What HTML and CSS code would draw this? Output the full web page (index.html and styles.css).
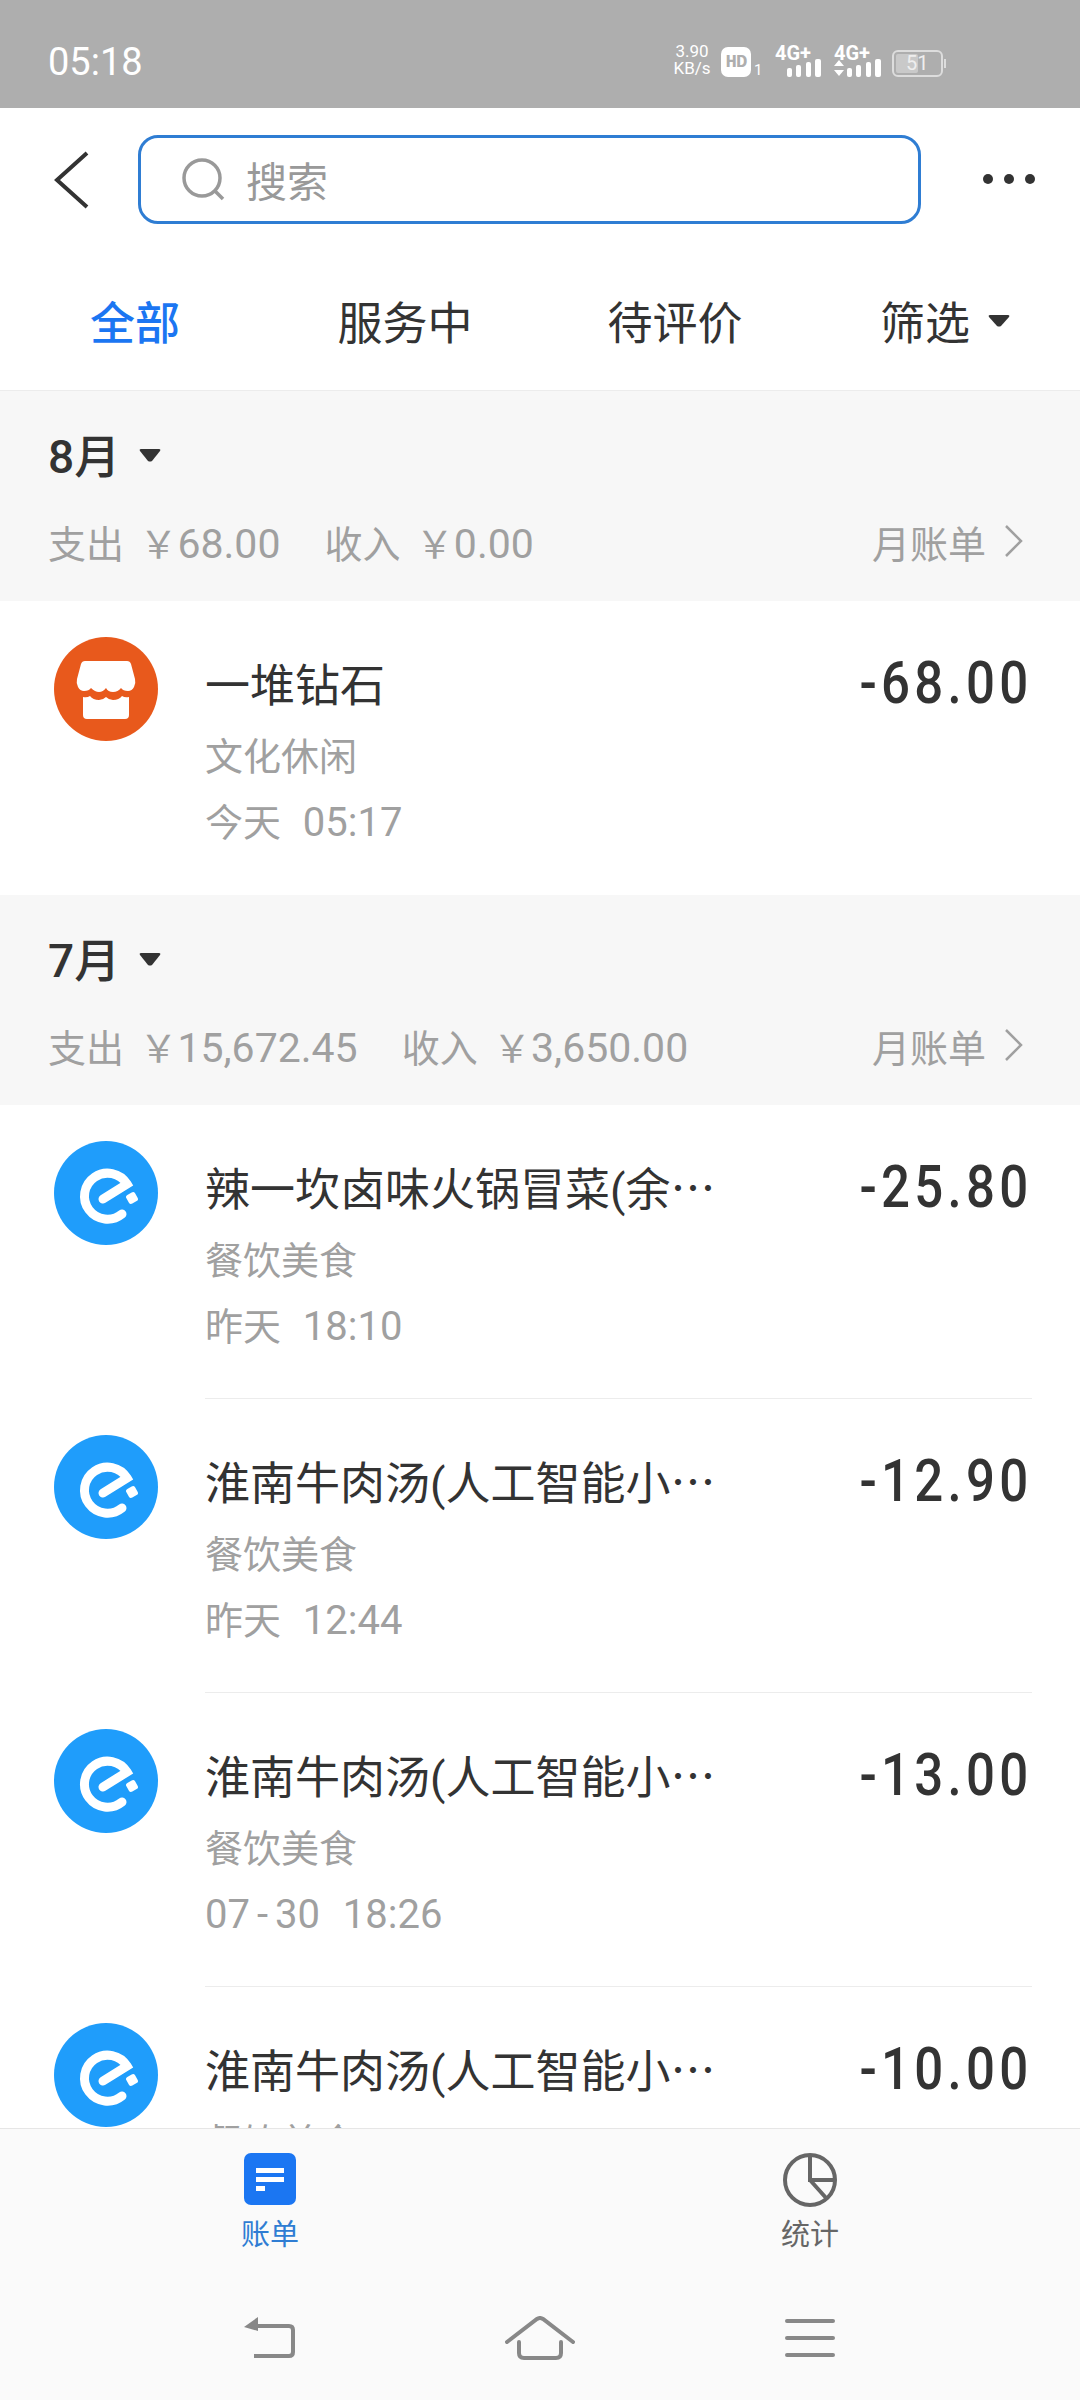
FILE: index.html
```html
<!DOCTYPE html>
<html lang="zh-CN">
<head>
  <meta charset="UTF-8" />
  <title>账单</title>
  <link rel="stylesheet" href="styles.css">
</head>
<body>

  <!-- Status bar -->
  <div class="status-bar">
    <span class="clock">05:18</span>
    <div class="status-icons">
      <div class="speed"><span>3.90</span><span>KB/s</span></div>
      <div class="hd"><b>HD</b><i>1</i></div>
      <div class="net">
        <span class="net-type">4G+</span>
        <svg class="bars" width="34" height="18" viewBox="0 0 34 18"><rect x="0" y="9" width="5" height="9" rx="2"/><rect x="9" y="6" width="5" height="12" rx="2"/><rect x="19" y="3" width="5" height="15" rx="2"/><rect x="28" y="0" width="6" height="18" rx="2"/></svg>
      </div>
      <div class="net net-two">
        <span class="net-type">4G+</span>
        <svg class="bars" width="47" height="18" viewBox="0 0 47 18"><path d="M5 1l5 6H0zM5 17l5-6H0z"/><rect x="13" y="9" width="5" height="9" rx="2"/><rect x="22" y="6" width="5" height="12" rx="2"/><rect x="32" y="3" width="5" height="15" rx="2"/><rect x="41" y="0" width="6" height="18" rx="2"/></svg>
      </div>
      <div class="battery"><div class="battery-fill" style="width: 51%"></div><span>51</span></div>
      <div class="battery-nub"></div>
    </div>
  </div>

  <!-- Search -->
  <div class="search-row">
    <svg class="back" width="36" height="58" viewBox="0 0 36 58"><path d="M34 2L4 29l30 27" fill="none" stroke="#333" stroke-width="4"/></svg>
    <div class="search-box">
      <svg width="46" height="46" viewBox="0 0 46 46"><circle cx="21" cy="21" r="18" fill="none" stroke="#999" stroke-width="3.5"/><path d="M33 33l9 9" stroke="#999" stroke-width="3.5"/></svg>
      <span>搜索</span>
    </div>
    <div class="more"><i></i><i></i><i></i></div>
  </div>

  <!-- Tabs -->
  <div class="tabs">
    <div class="tab active">全部</div>
    <div class="tab">服务中</div>
    <div class="tab">待评价</div>
    <div class="tab">筛选<svg class="caret" width="22" height="13" viewBox="0 0 22 13"><path d="M2 1h18q2 0 1 2l-8 9q-2 1-4 0L1 3q-1-2 1-2z"/></svg></div>
  </div>

  <!-- List -->
  <div class="list">

    <div class="month">
      <div class="month-name">8月<svg class="caret" width="22" height="14" viewBox="0 0 22 14"><path d="M2 1h18q2 0 1 2l-8 10q-2 1-4 0L1 3q-1-2 1-2z"/></svg></div>
      <div class="month-sum">
        <div><span class="sum">支出 ￥<b>68.00</b></span><span class="sum">收入 ￥<b>0.00</b></span></div>
        <div class="month-bill">月账单
          <svg width="20" height="32" viewBox="0 0 20 32"><path d="M2 1l15 15L2 31" fill="none" stroke="#a0a0a0" stroke-width="2.5"/></svg>
        </div>
      </div>
    </div>

    <div class="item last">
      <svg class="logo" width="104" height="104" viewBox="0 0 104 104">
        <circle cx="52" cy="52" r="52" fill="#e8591c"/>
        <path d="M31 24h42q3 0 4 3l4 15q1 4-1 8-2 4-6 4-5 0-7-3-3 4-8 4t-7-4q-3 4-7 4t-8-4q-2 3-7 3-4 0-6-4-2-4-1-8l4-15q1-3 4-3z" fill="#fff"/>
        <path d="M29 60q4 1 7-1 3 4 9 4 4 0 7-3 3 3 7 3 6 0 9-4 3 2 7 1v18q0 4-4 4H33q-4 0-4-4z" fill="#fff"/>
      </svg>
      <div class="item-info">
        <div class="item-title">一堆钻石</div>
        <div class="item-sub">文化休闲</div>
        <div class="item-sub time">今天&nbsp;&nbsp;<b>05:17</b></div>
      </div>
      <div class="amount">-68.00</div>
    </div>

    <div class="month">
      <div class="month-name">7月<svg class="caret" width="22" height="14" viewBox="0 0 22 14"><path d="M2 1h18q2 0 1 2l-8 10q-2 1-4 0L1 3q-1-2 1-2z"/></svg></div>
      <div class="month-sum">
        <div><span class="sum">支出 ￥<b>15,672.45</b></span><span class="sum">收入 ￥<b>3,650.00</b></span></div>
        <div class="month-bill">月账单
          <svg width="20" height="32" viewBox="0 0 20 32"><path d="M2 1l15 15L2 31" fill="none" stroke="#a0a0a0" stroke-width="2.5"/></svg>
        </div>
      </div>
    </div>

    <div class="item">
      <svg class="logo" width="104" height="104" viewBox="0 0 104 104"><use href="#ele"/></svg>
      <div class="item-info">
        <div class="item-title">辣一坎卤味火锅冒菜(余⋯</div>
        <div class="item-sub">餐饮美食</div>
        <div class="item-sub time">昨天&nbsp;&nbsp;<b>18:10</b></div>
      </div>
      <div class="amount">-25.80</div>
    </div>

    <div class="item">
      <svg class="logo" width="104" height="104" viewBox="0 0 104 104"><use href="#ele"/></svg>
      <div class="item-info">
        <div class="item-title">淮南牛肉汤(人工智能小⋯</div>
        <div class="item-sub">餐饮美食</div>
        <div class="item-sub time">昨天&nbsp;&nbsp;<b>12:44</b></div>
      </div>
      <div class="amount">-12.90</div>
    </div>

    <div class="item">
      <svg class="logo" width="104" height="104" viewBox="0 0 104 104"><use href="#ele"/></svg>
      <div class="item-info">
        <div class="item-title">淮南牛肉汤(人工智能小⋯</div>
        <div class="item-sub">餐饮美食</div>
        <div class="item-sub time"><b>07<span class="dash">-</span>30&nbsp;&nbsp;18:26</b></div>
      </div>
      <div class="amount">-13.00</div>
    </div>

    <div class="item">
      <svg class="logo" width="104" height="104" viewBox="0 0 104 104"><use href="#ele"/></svg>
      <div class="item-info">
        <div class="item-title">淮南牛肉汤(人工智能小⋯</div>
        <div class="item-sub">餐饮美食</div>
      </div>
      <div class="amount">-10.00</div>
    </div>

  </div>

  <!-- Bottom tabs -->
  <div class="bottom">
    <div class="bottom-tabs">
      <div class="bottom-tab active">
        <svg width="52" height="52" viewBox="0 0 52 52"><rect width="52" height="52" rx="7" fill="#1b76f2"/><path d="M12 15h28v5H12zM12 24h28v5H12zM12 33h9v5h-9z" fill="#fff"/></svg>
        <span>账单</span>
      </div>
      <div class="bottom-tab">
        <svg width="54" height="54" viewBox="0 0 54 54"><circle cx="27" cy="27" r="25" fill="none" stroke="#666" stroke-width="4"/><path d="M27 2v25h25M27 27l17 19" fill="none" stroke="#666" stroke-width="4"/></svg>
        <span>统计</span>
      </div>
    </div>
    <div class="sys-nav">
      <svg width="52" height="42" viewBox="0 0 52 42"><path d="M14 0v14L0 10z" fill="#888"/><path d="M10 9h35q4 0 4 4v22q0 4-4 4H10" fill="none" stroke="#888" stroke-width="4"/></svg>
      <svg width="70" height="44" viewBox="0 0 70 44"><path d="M2 26L32 3q3-2 6 0l30 23M14 26v11q0 5 5 5h32q5 0 5-5V26" fill="none" stroke="#888" stroke-width="4" stroke-linecap="round"/></svg>
      <svg width="50" height="40" viewBox="0 0 50 40"><path d="M2 3h46M2 20h46M2 37h46" stroke="#888" stroke-width="4" stroke-linecap="round"/></svg>
    </div>
  </div>

  <!-- Shared logo -->
  <svg class="defs" width="0" height="0">
    <defs>
      <g id="ele">
        <circle cx="52" cy="52" r="52" fill="#1f9dfb"/>
        <path d="M49 58L73 43A23 23 0 1 0 68 73" fill="none" stroke="#fff" stroke-width="9" stroke-linecap="round"/>
        <rect x="73" y="52" width="10" height="10" rx="2.5" fill="#fff" transform="rotate(-30 78 57)"/>
      </g>
    </defs>
  </svg>

</body>
</html>
```

FILE: styles.css
```css
* {
  box-sizing: border-box;
  margin: 0;
  padding: 0;
}

body {
  width: 1080px;
  height: 2400px;
  display: flex;
  flex-direction: column;
  overflow: hidden;
  background: #fff;
  color: #333;
  font-family: 'Roboto', 'Noto Sans CJK SC', sans-serif;
}

/* Status bar */
.status-bar {
  height: 108px;
  flex-shrink: 0;
  display: flex;
  justify-content: space-between;
  align-items: center;
  padding: 0 134px 0 48px;
  background: #aeaeae;
  color: #fff;
}

.clock {
  font-size: 38px;
  margin-top: 16px;
}

.status-icons {
  display: flex;
  align-items: flex-end;
  height: 30px;
  margin-top: 16px;
}

.speed {
  width: 38px;
  margin-right: 10px;
  display: flex;
  flex-direction: column;
  align-items: center;
  font-size: 17px;
  line-height: 17px;
}

.hd {
  display: flex;
  align-items: flex-end;
  margin-right: 14px;
}

.hd b {
  width: 30px;
  height: 30px;
  border-radius: 7px;
  background: #fff;
  color: #aeaeae;
  font-size: 19px;
  line-height: 30px;
  text-align: center;
  font-family: 'Liberation Mono', monospace;
  letter-spacing: -1px;
}

.hd i {
  width: 7px;
  font-style: normal;
  font-size: 15px;
  line-height: 14px;
  margin-left: 3px;
}

.net {
  width: 46px;
  height: 32px;
  display: flex;
  flex-direction: column;
  align-items: flex-end;
  margin-right: 13px;
  position: relative;
}

.net-two {
  width: 47px;
  margin-right: 11px;
}

.net-type {
  position: absolute;
  left: 0;
  top: -2px;
  font-size: 20px;
  line-height: 20px;
  font-weight: 700;
}

.bars {
  fill: #fff;
  margin-top: auto;
}

.battery {
  width: 51px;
  height: 27px;
  border: 2px solid #ddd;
  border-radius: 6px;
  padding: 2px;
  position: relative;
}

.battery-fill {
  height: 100%;
  background: #c9c9c9;
  border-radius: 2px;
}

.battery span {
  position: absolute;
  left: 12px;
  top: 0;
  font-size: 20px;
  line-height: 23px;
  color: #eee;
}

.battery-nub {
  width: 2px;
  height: 9px;
  margin: 0 0 9px 1px;
  background: #ddd;
}

/* Search row */
.search-row {
  height: 146px;
  flex-shrink: 0;
  display: flex;
  align-items: flex-start;
  padding-top: 27px;
}

.back {
  margin: 16px 0 0 53px;
}

.search-box {
  width: 783px;
  height: 89px;
  margin-left: 49px;
  display: flex;
  align-items: center;
  gap: 19px;
  padding-left: 40px;
  border: 3px solid #2f7dd3;
  border-radius: 20px;
  font-size: 41px;
  color: #999;
}

.search-box span {
  margin-bottom: 2px;
}

.more {
  display: flex;
  gap: 11px;
  margin: 39px 0 0 62px;
}

.more i {
  width: 10px;
  height: 10px;
  border-radius: 50%;
  background: #333;
}

/* Tabs */
.tabs {
  height: 137px;
  flex-shrink: 0;
  display: grid;
  grid-template-columns: repeat(4, 1fr);
  align-items: center;
  padding-bottom: 3px;
  border-bottom: 1px solid #ececec;
  font-size: 45px;
  text-align: center;
}

.tab {
  display: flex;
  justify-content: center;
  align-items: center;
}

.tab.active {
  color: #1b76f2;
  font-weight: 500;
}

.tab .caret {
  margin-left: 18px;
}

.caret {
  fill: #333;
}

/* List */
.list {
  flex: 1;
  min-height: 0;
  overflow: hidden;
}

.month {
  height: 210px;
  padding: 32px 54px 0 48px;
  background: #f7f7f7;
}

.month-name {
  display: flex;
  align-items: center;
  gap: 19px;
  height: 60px;
  font-size: 46px;
  font-weight: 500;
}

.month-name .caret {
  margin-top: 3px;
}

.month-sum {
  display: flex;
  justify-content: space-between;
  align-items: center;
  height: 60px;
  margin-top: 28px;
  font-size: 38px;
  color: #a0a0a0;
}

.sum {
  margin-right: 44px;
  word-spacing: 6px;
}

.sum b {
  font-size: 41px;
  font-weight: 400;
}

.month-bill {
  display: flex;
  align-items: center;
  gap: 18px;
  margin-right: 2px;
}

.item {
  height: 294px;
  display: flex;
  align-items: flex-start;
  padding: 36px 48px 0 54px;
  position: relative;
}

/* divider starts at the text column */
.item::after {
  content: "";
  position: absolute;
  left: 205px;
  right: 48px;
  bottom: 0;
  height: 1px;
  background: #ececec;
}

.item.last::after {
  display: none;
}

.logo {
  flex-shrink: 0;
}

.item-info {
  flex: 1;
  margin: 22px 0 0 47px;
}

.item-title {
  font-size: 45px;
  line-height: 56px;
}

.item-sub {
  font-size: 38px;
  line-height: 64px;
  margin-top: 10px;
  color: #a0a0a0;
}

.item-sub.time {
  margin-top: 2px;
  word-spacing: 1.5px;
}

.item-sub b {
  font-size: 40px;
  font-weight: 400;
}

.dash {
  margin: 0 7px;
}

/* no condensed font here, so squeeze the digits to the narrow look */
.amount {
  font-size: 60px;
  line-height: 70px;
  font-weight: 500;
  letter-spacing: 5px;
  margin: 11px 0 0;
  transform: scaleX(0.85);
  transform-origin: right center;
}

/* Bottom tabs */
.bottom {
  height: 272px;
  flex-shrink: 0;
  border-top: 1px solid #e6e6e6;
  background: #fafafa;
}

.bottom-tabs {
  display: grid;
  grid-template-columns: 270px 270px;
  justify-content: space-between;
  padding: 24px 135px 0;
}

.bottom-tab {
  display: flex;
  flex-direction: column;
  align-items: center;
  height: 99px;
  justify-content: space-between;
  font-size: 29px;
  line-height: 34px;
  color: #666;
}

.bottom-tab.active {
  color: #2f7dd3;
}

.sys-nav {
  display: grid;
  grid-template-columns: repeat(3, 270px);
  justify-items: center;
  align-items: center;
  padding: 64px 135px 0;
}

.defs {
  position: absolute;
}
```
